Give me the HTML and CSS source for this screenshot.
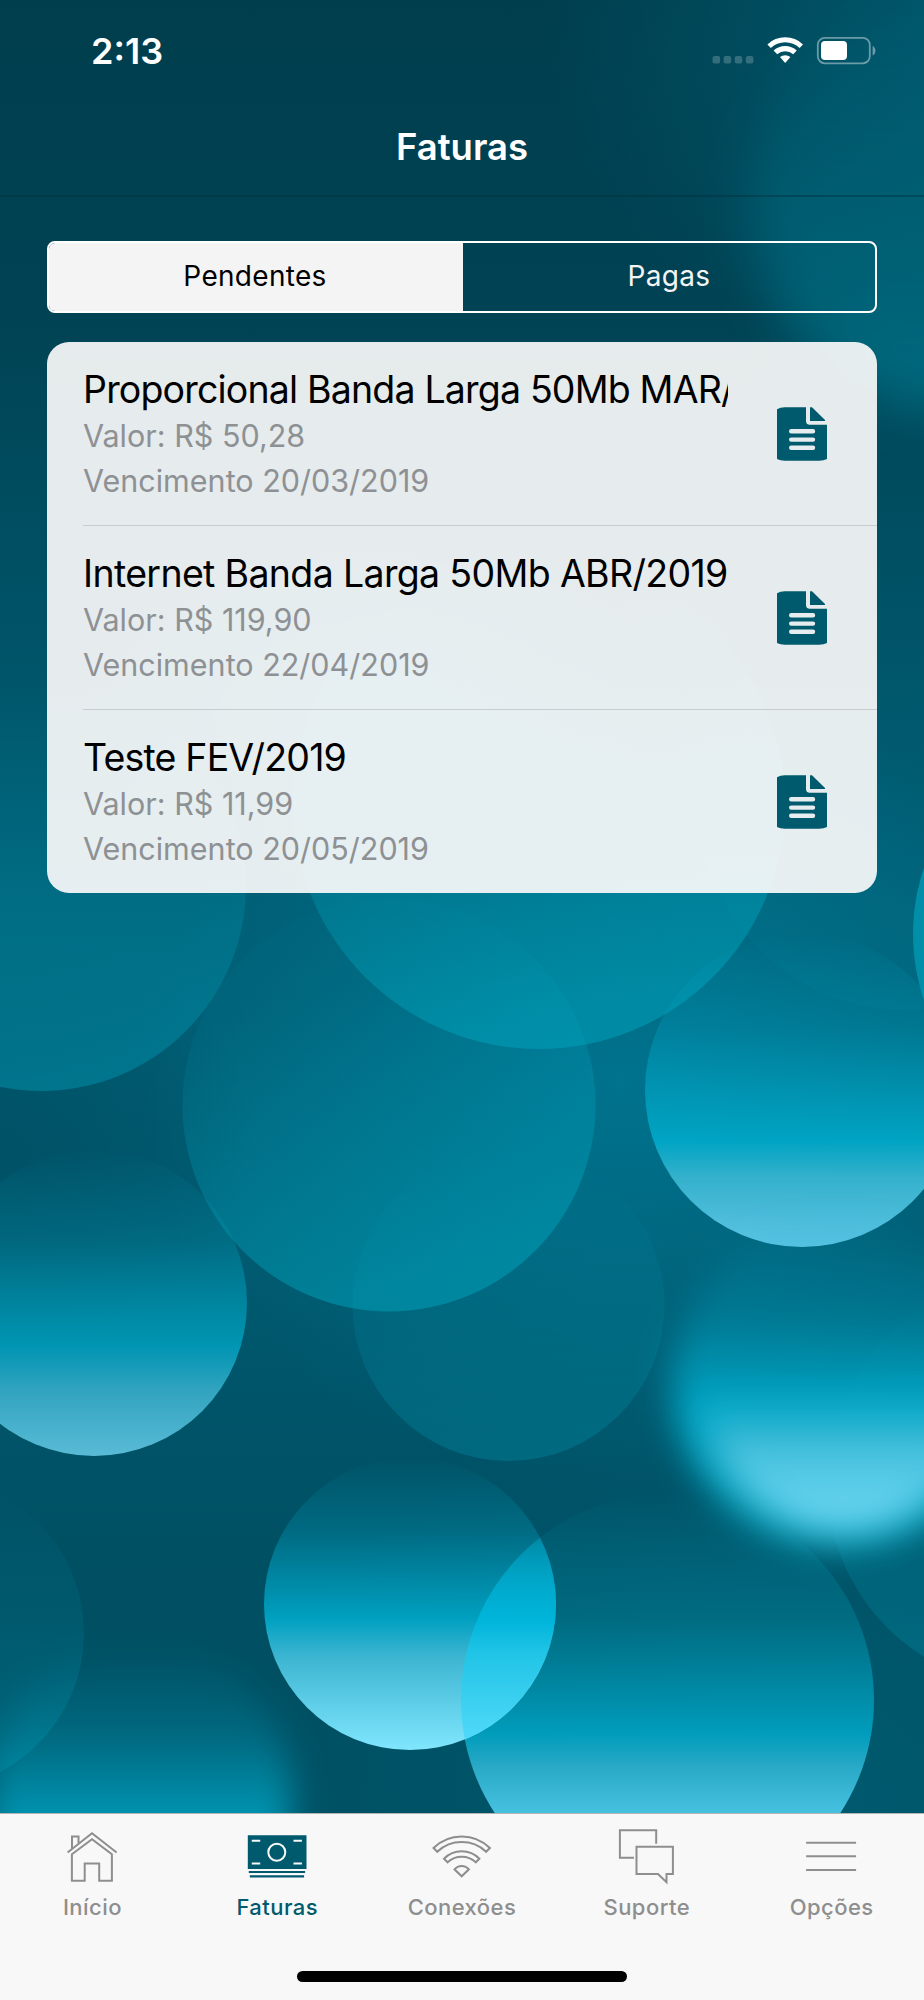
FILE: index.html
```html
<!DOCTYPE html>
<html lang="pt-BR">
<head>
<meta charset="utf-8">
<title>Faturas</title>
<link rel="stylesheet" href="styles.css">
</head>
<body>
<div class="screen">
  <svg class="wallpaper" viewBox="0 0 924 2000" aria-hidden="true">
    <defs>
      <linearGradient id="base" x1="0" y1="0" x2="0" y2="1">
        <stop offset="0" stop-color="#003e4d"/><stop offset=".16" stop-color="#004354"/>
        <stop offset=".3" stop-color="#005266"/><stop offset=".45" stop-color="#005e74"/>
        <stop offset=".6" stop-color="#005a70"/><stop offset=".8" stop-color="#004f62"/>
        <stop offset="1" stop-color="#004f62"/>
      </linearGradient>
      <radialGradient id="glow"><stop offset="0" stop-color="#007f9d" stop-opacity=".65"/><stop offset="1" stop-color="#007f9d" stop-opacity="0"/></radialGradient>
      <radialGradient id="shade"><stop offset="0" stop-color="#003c4c" stop-opacity=".3"/><stop offset="1" stop-color="#003c4c" stop-opacity="0"/></radialGradient>
      <linearGradient id="soft" x1="0" y1="0" x2="0" y2="1"><stop offset="0" stop-color="#009cb6" stop-opacity="0"/><stop offset="1" stop-color="#009cb6" stop-opacity=".45"/></linearGradient>
      <linearGradient id="mid" x1="0" y1="0" x2=".25" y2="1"><stop offset="0" stop-color="#00a5be" stop-opacity="0"/><stop offset=".3" stop-color="#00a5be" stop-opacity=".07"/><stop offset="1" stop-color="#00a5be" stop-opacity=".5"/></linearGradient>
      <linearGradient id="faint" x1="0" y1="0" x2="0" y2="1"><stop offset="0" stop-color="#0092ac" stop-opacity="0"/><stop offset="1" stop-color="#0092ac" stop-opacity=".34"/></linearGradient>
      <linearGradient id="bright" x1="0" y1="0" x2="0" y2="1">
        <stop offset="0" stop-color="#00a8c8" stop-opacity="0"/><stop offset=".3" stop-color="#00a8c8" stop-opacity=".28"/>
        <stop offset=".66" stop-color="#00a8c8" stop-opacity=".93"/><stop offset=".78" stop-color="#35b1cc"/><stop offset="1" stop-color="#5cc4e4"/>
      </linearGradient>
      <linearGradient id="haze" x1="0" y1="0" x2="0" y2="1">
        <stop offset="0" stop-color="#00a8c8" stop-opacity="0"/><stop offset=".3" stop-color="#00a8c8" stop-opacity=".34"/>
        <stop offset=".58" stop-color="#00a8c8"/><stop offset="1" stop-color="#0098b2" stop-opacity=".9"/>
      </linearGradient>
      <linearGradient id="hazeCore" x1="0" y1="0" x2="0" y2="1">
        <stop offset=".54" stop-color="#40bcd8" stop-opacity="0"/><stop offset=".7" stop-color="#45c0dc"/><stop offset=".95" stop-color="#6ad6f2"/>
      </linearGradient>
      <linearGradient id="pale" x1="0" y1="0" x2="0" y2="1">
        <stop offset="0" stop-color="#00a0bc" stop-opacity="0"/><stop offset=".3" stop-color="#00a0bc" stop-opacity=".26"/>
        <stop offset=".64" stop-color="#009ab8" stop-opacity=".93"/><stop offset=".78" stop-color="#30a3bf"/><stop offset="1" stop-color="#5abbd6"/>
      </linearGradient>
      <linearGradient id="large" x1="0" y1="0" x2="0" y2="1">
        <stop offset="0" stop-color="#00a0bc" stop-opacity="0"/><stop offset=".3" stop-color="#0096b0" stop-opacity=".34"/>
        <stop offset=".58" stop-color="#009fbf" stop-opacity=".96"/><stop offset=".66" stop-color="#28a9c6"/><stop offset=".78" stop-color="#48c3e1"/><stop offset="1" stop-color="#69d2ee"/>
      </linearGradient>
      <linearGradient id="lit" x1="0" y1="0" x2="0" y2="1">
        <stop offset="0" stop-color="#00a0c0" stop-opacity="0"/><stop offset=".25" stop-color="#00a0c0" stop-opacity=".32"/>
        <stop offset=".55" stop-color="#00a0c0"/><stop offset=".68" stop-color="#3cb5d1"/><stop offset="1" stop-color="#80e6fe"/>
      </linearGradient>
      <linearGradient id="overlap" gradientUnits="userSpaceOnUse" x1="0" y1="1493" x2="0" y2="1750">
        <stop offset="0" stop-color="#00a8cc" stop-opacity="0"/><stop offset=".5" stop-color="#00b5da"/><stop offset=".62" stop-color="#20c4e6"/><stop offset="1" stop-color="#56dcfb"/>
      </linearGradient>
      <filter id="blur" x="-30%" y="-30%" width="160%" height="160%"><feGaussianBlur stdDeviation="17"/></filter>
      <filter id="blurWide" x="-30%" y="-30%" width="160%" height="160%"><feGaussianBlur stdDeviation="26"/></filter>
      <clipPath id="lens"><circle cx="667.5" cy="1700" r="206.5"/></clipPath>
    </defs>
    <rect width="924" height="2000" fill="url(#base)"/>
    <ellipse cx="620" cy="1080" rx="480" ry="400" fill="url(#glow)"/>
    <ellipse cx="960" cy="20" rx="420" ry="340" fill="url(#glow)" opacity=".6"/>
    <ellipse cx="0" cy="1150" rx="260" ry="220" fill="url(#shade)"/>
    <ellipse cx="800" cy="1800" rx="560" ry="420" fill="url(#glow)" opacity=".35"/>
    <ellipse cx="370" cy="710" rx="280" ry="200" fill="url(#glow)"/>
    <circle cx="955" cy="205" r="205" fill="url(#soft)" filter="url(#blurWide)"/>
    <circle cx="905" cy="804" r="206" fill="url(#faint)" opacity=".3"/>
    <circle cx="1119" cy="934" r="206" fill="#00a0bb" opacity=".7"/>
    <circle cx="41" cy="886" r="205" fill="url(#soft)"/>
    <circle cx="508.5" cy="1305" r="156" fill="url(#faint)"/>
    <circle cx="389" cy="1105" r="206.500" fill="url(#mid)"/>
    <circle cx="539" cy="803" r="246" fill="url(#mid)"/>
    <circle cx="802" cy="1090" r="157" fill="url(#bright)"/>
    <circle cx="94" cy="1303" r="153" fill="url(#pale)"/>
    <circle cx="1033" cy="1482" r="206" fill="url(#faint)"/>
    <circle cx="-73" cy="1633" r="157" fill="url(#faint)"/>
    <circle cx="140" cy="1795" r="152" fill="url(#bright)" filter="url(#blur)"/>
    <circle cx="667.5" cy="1700" r="206.500" fill="url(#large)"/>
    <circle cx="410" cy="1604" r="146" fill="url(#lit)"/>
    <circle cx="410" cy="1604" r="146" fill="url(#overlap)" clip-path="url(#lens)"/>
    <circle cx="838" cy="1384" r="166" fill="url(#haze)" filter="url(#blur)"/>
    <circle cx="843" cy="1390" r="142" fill="url(#hazeCore)" filter="url(#blur)"/>
  </svg>

  <header class="top">
    <div class="status">
      <span class="clock">2:13</span>
      <svg class="indicators" width="166" height="30" viewBox="0 0 166 30">
        <g fill="#fff" fill-opacity=".2"><rect x="2.500" y="21" width="7.600" height="7.400" rx="2"/><rect x="13.600" y="21" width="7.600" height="7.400" rx="2"/><rect x="24.700" y="21" width="7.600" height="7.400" rx="2"/><rect x="35.800" y="21" width="7.600" height="7.400" rx="2"/></g>
        <g fill="#fff">
          <path d="M57.400 9.400a25.600 25.600 0 0 1 35.600 0l-3.400 3.700a20.600 20.600 0 0 0-28.800 0Z"/>
          <path d="M63.600 15.600a17 17 0 0 1 23.200 0l-3.600 3.700a11.800 11.800 0 0 0-16 0Z"/>
          <path d="M70 22a8.200 8.200 0 0 1 10.400 0l-5.200 6.100Z"/>
        </g>
        <rect x="107.800" y="2.800" width="52" height="25.500" rx="7" fill="none" stroke="#fff" stroke-opacity=".42" stroke-width="1.800"/>
        <rect x="111" y="6" width="26" height="19" rx="4" fill="#fff"/>
        <path d="M162.600 11v9.400c3.800-1.700 3.800-7.700 0-9.400Z" fill="#fff" fill-opacity=".42"/>
      </svg>
    </div>
    <h1 class="title">Faturas</h1>
  </header>

  <main class="content">
    <div class="segments">
      <div class="segment segment-active">Pendentes</div>
      <div class="segment">Pagas</div>
    </div>
    <ul class="card">
      <li class="invoice">
        <div class="info">
          <p class="name name-tight">Proporcional Banda Larga 50Mb MAR/</p>
          <p class="meta">Valor: R$ 50,28</p>
          <p class="meta">Vencimento 20/03/2019</p>
        </div>
        <svg class="doc" width="50" height="54" viewBox="0 0 50 54"><path d="M0 2.200Q3 .2 8 .2H29V14q0 3.700 3.700 3.700H50V52q-3 1.800-8 1.800H8Q3 53.800 0 52Z"/><path d="M33 .2h2L48 13v.9H33Z"/><path class="doc-lines" d="M14.200 24.300H36M14.200 32.600H36M14.200 40.800H36"/></svg>
      </li>
      <li class="invoice">
        <div class="info">
          <p class="name">Internet Banda Larga 50Mb ABR/2019</p>
          <p class="meta">Valor: R$ 119,90</p>
          <p class="meta">Vencimento 22/04/2019</p>
        </div>
        <svg class="doc" width="50" height="54" viewBox="0 0 50 54"><path d="M0 2.200Q3 .2 8 .2H29V14q0 3.700 3.700 3.700H50V52q-3 1.800-8 1.800H8Q3 53.800 0 52Z"/><path d="M33 .2h2L48 13v.9H33Z"/><path class="doc-lines" d="M14.200 24.300H36M14.200 32.600H36M14.200 40.800H36"/></svg>
      </li>
      <li class="invoice">
        <div class="info">
          <p class="name name-tight">Teste FEV/2019</p>
          <p class="meta">Valor: R$ 11,99</p>
          <p class="meta">Vencimento 20/05/2019</p>
        </div>
        <svg class="doc" width="50" height="54" viewBox="0 0 50 54"><path d="M0 2.200Q3 .2 8 .2H29V14q0 3.700 3.700 3.700H50V52q-3 1.800-8 1.800H8Q3 53.800 0 52Z"/><path d="M33 .2h2L48 13v.9H33Z"/><path class="doc-lines" d="M14.200 24.300H36M14.200 32.600H36M14.200 40.800H36"/></svg>
      </li>
    </ul>
  </main>

  <footer class="dock">
    <nav class="tabs">
      <a class="tab">
        <svg class="icon" viewBox="0 0 80 60"><path d="M15.600 26.500 40 7.200l24.600 19.300M20 23V10.500h6.500V17M19.900 28.300 40 13.300l19.900 15v26.400H47.200V37.600H32.700v17.100H19.900Z"/></svg>
        <span>Início</span>
      </a>
      <a class="tab tab-active">
        <svg class="icon" viewBox="0 0 80 60"><path class="solid" d="M10.800 9.300h58.700V43H10.800ZM11.800 45h56.300v2H11.800ZM12.800 49.300h54.300v2.100H12.800Z"/><path class="cut" d="M14.800 14.700h8.400M56.500 14.700h8.400M14.800 37.400h8.400M56.500 37.400h8.400"/><circle class="cut" cx="39.800" cy="26.300" r="8.500"/></svg>
        <span>Faturas</span>
      </a>
      <a class="tab">
        <svg class="icon" viewBox="0 0 80 60"><path d="M11.500 22a40.300 40.300 0 0 1 56.400 0l-3.800 3.800a35.500 35.500 0 0 0-48.800 0ZM22 32.700a24.600 24.600 0 0 1 35.400 0l-3.600 3.600a20.800 20.800 0 0 0-28.200 0ZM32.500 43.300a9.300 9.300 0 0 1 14.400 0l-7.200 7Z"/></svg>
        <span>Conexões</span>
      </a>
      <a class="tab">
        <svg class="icon" viewBox="0 0 80 60"><path d="M26.900 31.700h-14V4.300h36.300v13.400M29.500 20.700h36.400V48h-6.400v8.200L51 48H29.500Z"/></svg>
        <span>Suporte</span>
      </a>
      <a class="tab">
        <svg class="icon" viewBox="0 0 80 60"><path d="M14.100 16.700h50M14.100 30.300h50M14.100 44h50"/></svg>
        <span>Opções</span>
      </a>
    </nav>
    <div class="home-bar"></div>
  </footer>
</div>
</body>
</html>
```
FILE: styles.css
```css
* { box-sizing: border-box; }
body { margin: 0; font-family: Inter, "Liberation Sans", sans-serif; }
.screen {
  position: relative;
  width: 924px;
  height: 2000px;
  display: flex;
  flex-direction: column;
  overflow: hidden;
}
.wallpaper { position: absolute; inset: 0; width: 924px; height: 2000px; }
.top, .content, .dock { position: relative; }

.top { height: 197px; border-bottom: 2px solid rgba(0, 45, 58, .4); color: #fff; }
.status {
  height: 100px;
  padding: 35px 44px 0 91px;
  display: flex;
  justify-content: space-between;
  align-items: flex-start;
}
.clock { font-size: 36px; line-height: 32px; font-weight: 600; }
.indicators { display: block; margin-right: 4px; }
.title { margin: 22px 0 0; text-align: center; font-size: 36.500px; line-height: 50px; font-weight: 600; }

.content { flex: 1; padding: 44px 47px 0; }
.segments {
  height: 72px;
  display: flex;
  border: 2px solid #fff;
  border-radius: 8px;
  overflow: hidden;
}
.segment { flex: 1; text-align: center; font-size: 28px; letter-spacing: .3px; line-height: 67px; color: #f4f4f4; }
.segment-active { flex: 0 0 414px; padding-right: 2px; background: #f4f4f4; color: #000; }

.card {
  list-style: none;
  margin: 29px 0 0;
  padding: 0 0 0 36px;
  height: 551px;
  border-radius: 22px;
  background: rgba(255, 253, 253, .9);
}
.invoice { height: 184px; padding: 25px 50px 0 0; display: flex; justify-content: space-between; }
.invoice:not(:last-child) { border-bottom: 1px solid #c8cccf; }
.info { width: 645px; overflow: hidden; }
.name { margin: 0; font-size: 37.500px; letter-spacing: -.66px; line-height: 46px; color: #000; white-space: nowrap; }
.name-tight { letter-spacing: -.82px; }
.meta { margin: 0; font-size: 30.500px; line-height: 45px; color: #8e9194; white-space: nowrap; }
.doc { margin-top: 40px; fill: #005a6e; }
.doc-lines { stroke: #e5edef; stroke-width: 4.400; stroke-linecap: round; }

.dock { height: 187px; background: #f8f8f8; border-top: 1px solid #b2b4b6; }
.tabs { height: 157px; padding-top: 12px; display: flex; }
.tab { flex: 1; display: flex; flex-direction: column; align-items: center; color: #8e8e8e; font-size: 22px; line-height: 28px; font-weight: 500; }
.tab span { margin-top: 7px; letter-spacing: .45px; }
.tab-active { color: #005a6e; }
.icon { width: 80px; height: 60px; fill: none; stroke: currentColor; stroke-width: 2; }
.solid { fill: currentColor; stroke: none; }
.cut { stroke: #f8f8f8; stroke-width: 2; }
.home-bar { width: 330px; height: 11px; margin: 0 auto; border-radius: 6px; background: #000; }
```
